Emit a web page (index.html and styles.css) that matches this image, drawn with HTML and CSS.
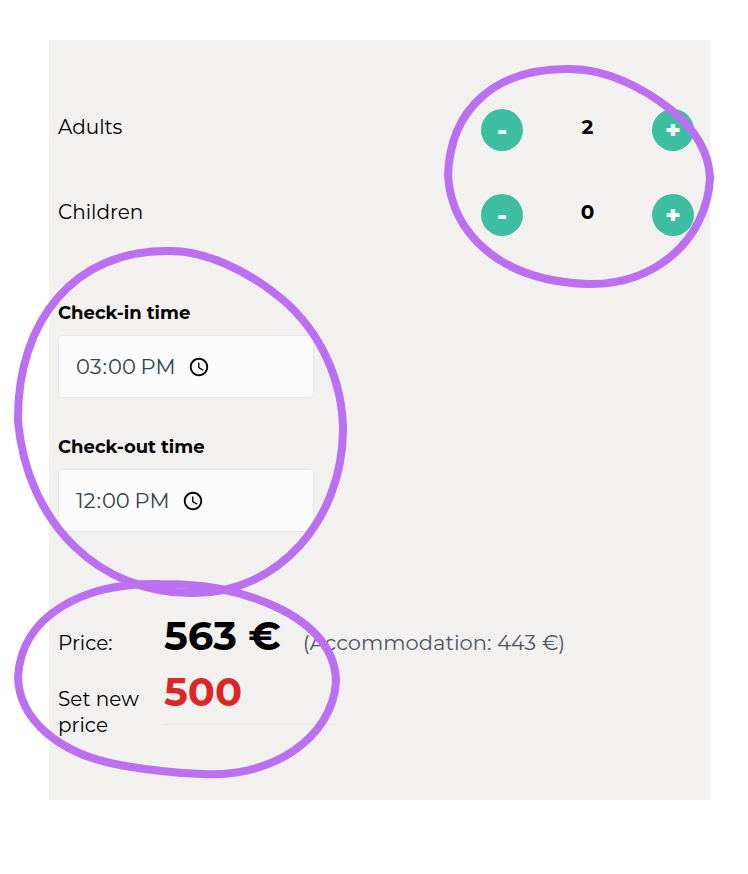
FILE: index.html
```html
<!DOCTYPE html>
<html lang="en">
<head>
<meta charset="utf-8">
<meta name="viewport" content="width=device-width, initial-scale=1">
<title>Booking details</title>
<link rel="stylesheet" href="styles.css">
</head>
<body>
<main class="panel">
  <section class="guests">
    <div class="guest-row">
      <span class="guest-label">Adults</span>
      <div class="stepper">
        <button class="step" type="button" aria-label="Fewer adults">-</button>
        <output class="count">2</output>
        <button class="step" type="button" aria-label="More adults">+</button>
      </div>
    </div>
    <div class="guest-row">
      <span class="guest-label">Children</span>
      <div class="stepper">
        <button class="step" type="button" aria-label="Fewer children">-</button>
        <output class="count">0</output>
        <button class="step" type="button" aria-label="More children">+</button>
      </div>
    </div>
  </section>

  <section class="times">
    <div class="field">
      <label class="field-label" for="checkin">Check-in time</label>
      <input class="time" id="checkin" type="time" value="15:00">
    </div>
    <div class="field">
      <label class="field-label" for="checkout">Check-out time</label>
      <input class="time" id="checkout" type="time" value="12:00">
    </div>
  </section>

  <section class="pricing">
    <span>Price:</span>
    <div class="total"><strong class="amount">563 €</strong><span class="detail">(Accommodation: 443 €)</span></div>
    <label for="newprice">Set new price</label>
    <input class="amount new-price" id="newprice" type="text" inputmode="numeric" value="500">
  </section>

  <svg class="marks marks-right" viewBox="440 40 280 260" aria-hidden="true">
    <path d="M448 176C450 108 496 68 570 69C607 69 643 88 670 109C695 129 709 152 710 178C707 240 654 286 588 284C498 281 452 232 448 176Z"/>
  </svg>
  <svg class="marks marks-left" viewBox="0 40 360 760" aria-hidden="true">
    <path d="M18 421C17 319 76 250 168 251C204 250 247 270 282 299C322 333 343 383 343 431C342 520 278 594 193 593C100 594 27 524 18 421Z"/>
    <path d="M18 677C21 616 83 582 160 584C205 584 239 590 274 606C314 624 336 651 336 682C332 739 271 778 203 774C176 773 147 770 120 765C58 754 19 719 18 677Z"/>
  </svg>
</main>
</body>
</html>
```
FILE: styles.css
```css
* {
  box-sizing: border-box;
}

body {
  margin: 0;
  padding: 40px 38px 74px 49px;
  background: #fff;
  color: #000;
  font-family: Montserrat, Inter, sans-serif;
  font-size: 20px;
  line-height: 26px;
}

input,
button {
  font: inherit;
}

.panel {
  position: relative;
  padding: 69px 16px 62px 9px;
  background: #f3f1f0;
}

.guests {
  display: grid;
  gap: 43px;
}

.guest-row {
  display: flex;
  justify-content: space-between;
  line-height: 36px;
}

.stepper {
  display: flex;
  justify-content: space-between;
  width: 213px;
}

.step {
  width: 42px;
  height: 42px;
  padding: 0;
  border: 0;
  border-radius: 50%;
  background: #3dbea1;
  color: #fff;
  font-size: 26px;
  font-weight: 800;
}

.count {
  font-weight: 700;
}

.times {
  display: grid;
  gap: 36px;
  margin-top: 64px;
}

.field-label {
  display: block;
  margin-bottom: 9px;
  font-size: 18px;
  font-weight: 700;
}

.time {
  display: flex;
  width: 256px;
  height: 63px;
  padding: 0 16px;
  border: 1px solid #e5e7eb;
  border-radius: 5px;
  background: #fcfcfc;
  color: #374151;
  font-size: 21px;
}

.time::-webkit-datetime-edit {
  flex: none;
}

.time::-webkit-calendar-picker-indicator {
  width: 22px;
  height: 22px;
  margin-left: 11px;
  padding: 0;
}

.pricing {
  display: grid;
  grid-template-columns: 90px 1fr;
  column-gap: 16px;
  row-gap: 8px;
  align-items: baseline;
  margin-top: 80px;
}

.total {
  display: flex;
  align-items: baseline;
  gap: 22px;
}

.amount {
  font-size: 40px;
  font-weight: 700;
  line-height: 48px;
}

.detail {
  color: #4b5563;
  font-size: 21px;
}

.new-price {
  width: 172px;
  padding: 0 0 8px;
  border: 0;
  border-bottom: 1px solid #e5e7eb;
  background: transparent;
  color: #dc2626;
}

.marks {
  position: absolute;
  top: 0;
  fill: none;
  stroke: #ba70f0;
  stroke-width: 8;
  stroke-linejoin: round;
  pointer-events: none;
}

.marks-right {
  right: -10px;
  width: 280px;
  height: 260px;
}

.marks-left {
  left: -49px;
  width: 360px;
  height: 760px;
}
```
